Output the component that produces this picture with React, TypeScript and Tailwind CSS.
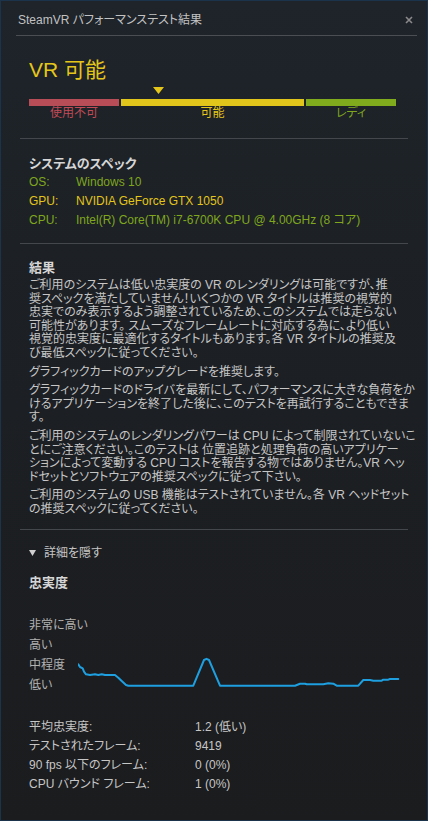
const chartPoints = [
  [0.3, 49.3], [2, 52], [4.7, 53.3], [6, 56.7], [8, 59.3], [12, 60], [17, 59.3],
  [20.3, 60], [23.7, 59.3], [27, 60], [37, 60], [40.3, 62.7], [43.7, 66], [48, 70],
  [50.3, 70.7], [115.3, 70.7], [126, 45], [128.5, 43.8], [131, 45], [142, 70.7],
  [217, 70.7], [222, 68.7], [227, 68.7], [228.7, 69.3], [245.3, 69.3], [250.3, 68.3],
  [255.3, 68.7], [258.7, 70.7], [280.3, 70.7], [285.3, 65], [292, 65], [295.3, 65.7],
  [303.7, 65.7], [305.3, 64.7], [310.3, 64.7], [312, 64], [320.3, 64],
];

const specs = [
  { label: "OS:", value: "Windows 10", color: "text-[#7fa61d]" },
  { label: "GPU:", value: "NVIDIA GeForce GTX 1050", color: "text-[#e3c51b]" },
  { label: "CPU:", value: "Intel(R) Core(TM) i7-6700K CPU @ 4.00GHz (8 コア)", color: "text-[#7fa61d]" },
];

const stats = [
  { label: "平均忠実度:", value: "1.2 (低い)" },
  { label: "テストされたフレーム:", value: "9419" },
  { label: "90 fps 以下のフレーム:", value: "0 (0%)" },
  { label: "CPU バウンド フレーム:", value: "1 (0%)" },
];

const Divider: React.FC = () => <div className="h-px w-[388px] bg-[#44484d]" />;

const App: React.FC = () => {
  return (
    <div className="w-[428px] h-[821px] overflow-hidden border border-[#1b344c] bg-gradient-to-b from-[#1e242a] via-[#1c1f23] to-[#1b1c1e] font-['Liberation_Sans','Noto_Sans_CJK_JP',sans-serif] [font-feature-settings:'palt'] text-[#c6c6c6]">
      {/* title bar */}
      <div className="flex h-[34px] items-center justify-between pt-[4px] pl-[17px] pr-[14px]">
        <span className="text-[12px] leading-[14px] text-[#c2c2c2]">SteamVR パフォーマンステスト結果</span>
        <svg width="8" height="8" viewBox="0 0 8 8">
          <path d="M1 1 L7 7 M7 1 L1 7" stroke="#8a8a8a" strokeWidth="1.6" />
        </svg>
      </div>
      <div className="ml-[15px] mr-[10px] h-px bg-[#4b4f54]" />

      <div className="ml-[19px] w-[388px]">
        {/* result banner */}
        <div className="pl-[9px]">
          <div className="mt-[22px] text-[21px] leading-[24px] text-[#e5c61a]">VR 可能</div>
          <svg className="ml-[124px] mt-[5px] block" width="11" height="7" viewBox="0 0 11 7">
            <polygon points="0,0 11,0 5.5,7" fill="#e5c61a" />
          </svg>
          <div className="mt-[5px] flex gap-[2px]">
            <div className="w-[90px]">
              <div className="h-[7px] bg-[#b84c57]" />
              <div className="text-center text-[12px] leading-[14px] text-[#c24b57]">使用不可</div>
            </div>
            <div className="w-[183px]">
              <div className="h-[7px] bg-[#e2c51a]" />
              <div className="text-center text-[12px] leading-[14px] text-[#e5c61a]">可能</div>
            </div>
            <div className="w-[90px]">
              <div className="h-[7px] bg-[#7fab1c]" />
              <div className="text-center text-[12px] leading-[14px] text-[#7fa61d]">レディ</div>
            </div>
          </div>
        </div>

        <div className="mt-[18px]">
          <Divider />
        </div>

        {/* specs */}
        <div className="pl-[9px]">
          <div className="mt-[17px] text-[13px] font-bold leading-[16px] text-[#d6d6d6]">システムのスペック</div>
          <div className="mt-[1px]">
            {specs.map((s) => (
              <div key={s.label} className={`flex text-[12px] leading-[19px] ${s.color}`}>
                <span className="w-[47px]">{s.label}</span>
                <span className="whitespace-nowrap">{s.value}</span>
              </div>
            ))}
          </div>
        </div>

        <div className="mt-[13px]">
          <Divider />
        </div>

        {/* results */}
        <div className="pl-[9px]">
          <div className="mt-[16px] text-[13px] font-bold leading-[16px] text-[#d6d6d6]">結果</div>
          <div className="mt-[3px] flex flex-col gap-[5px] whitespace-nowrap text-[12px] leading-[13.6px]">
            <p>
              ご利用のシステムは低い忠実度の VR のレンダリングは可能ですが、推<br />
              奨スペックを満たしていません！いくつかの VR タイトルは推奨の視覚的<br />
              忠実でのみ表示するよう調整されているため、このシステムでは走らない<br />
              可能性があります。 スムーズなフレームレートに対応する為に、より低い<br />
              視覚的忠実度に最適化するタイトルもあります。各 VR タイトルの推奨及<br />
              び最低スペックに従ってください。
            </p>
            <p>グラフィックカードのアップグレードを推奨します。</p>
            <p>
              グラフィックカードのドライバを最新にして、パフォーマンスに大きな負荷をか<br />
              けるアプリケーションを終了した後に、このテストを再試行することもできま<br />
              す。
            </p>
            <p>
              ご利用のシステムのレンダリングパワーは CPU によって制限されていないこ<br />
              とにご注意ください。このテストは 位置追跡と処理負荷の高いアプリケー<br />
              ションによって変動する CPU コストを報告する物ではありません。VR ヘッ<br />
              ドセットとソフトウェアの推奨スペックに従って下さい。
            </p>
            <p>
              ご利用のシステムの USB 機能はテストされていません。各 VR ヘッドセット<br />
              の推奨スペックに従ってください。
            </p>
          </div>
        </div>

        <div className="mt-[12px]">
          <Divider />
        </div>

        {/* details */}
        <div className="pl-[9px]">
          <div className="mt-[15px] flex items-center gap-[8px] text-[12px] leading-[16px]">
            <svg width="7" height="6" viewBox="0 0 7 6">
              <polygon points="0,0 7,0 3.5,6" fill="#d0d0d0" />
            </svg>
            <span>詳細を隠す</span>
          </div>
          <div className="mt-[14px] text-[13px] font-bold leading-[16px] text-[#d6d6d6]">忠実度</div>

          <div className="mt-[24px] flex">
            <div className="w-[49px] shrink-0 whitespace-nowrap text-[12px] leading-[20px] text-[#b2b2b2]">
              <div>非常に高い</div>
              <div>高い</div>
              <div>中程度</div>
              <div>低い</div>
            </div>
            <svg width="322" height="80" viewBox="0 0 322 80">
              <polyline
                points={chartPoints.map((p) => p.join(",")).join(" ")}
                fill="none"
                stroke="#1e9fe0"
                strokeWidth="2"
                strokeLinejoin="round"
                strokeLinecap="round"
              />
            </svg>
          </div>

          <div className="mt-[23px] text-[12px] leading-[19px]">
            {stats.map((s) => (
              <div key={s.label} className="flex">
                <span className="w-[166px] whitespace-nowrap">{s.label}</span>
                <span>{s.value}</span>
              </div>
            ))}
          </div>
        </div>
      </div>
    </div>
  );
};

export default App;
